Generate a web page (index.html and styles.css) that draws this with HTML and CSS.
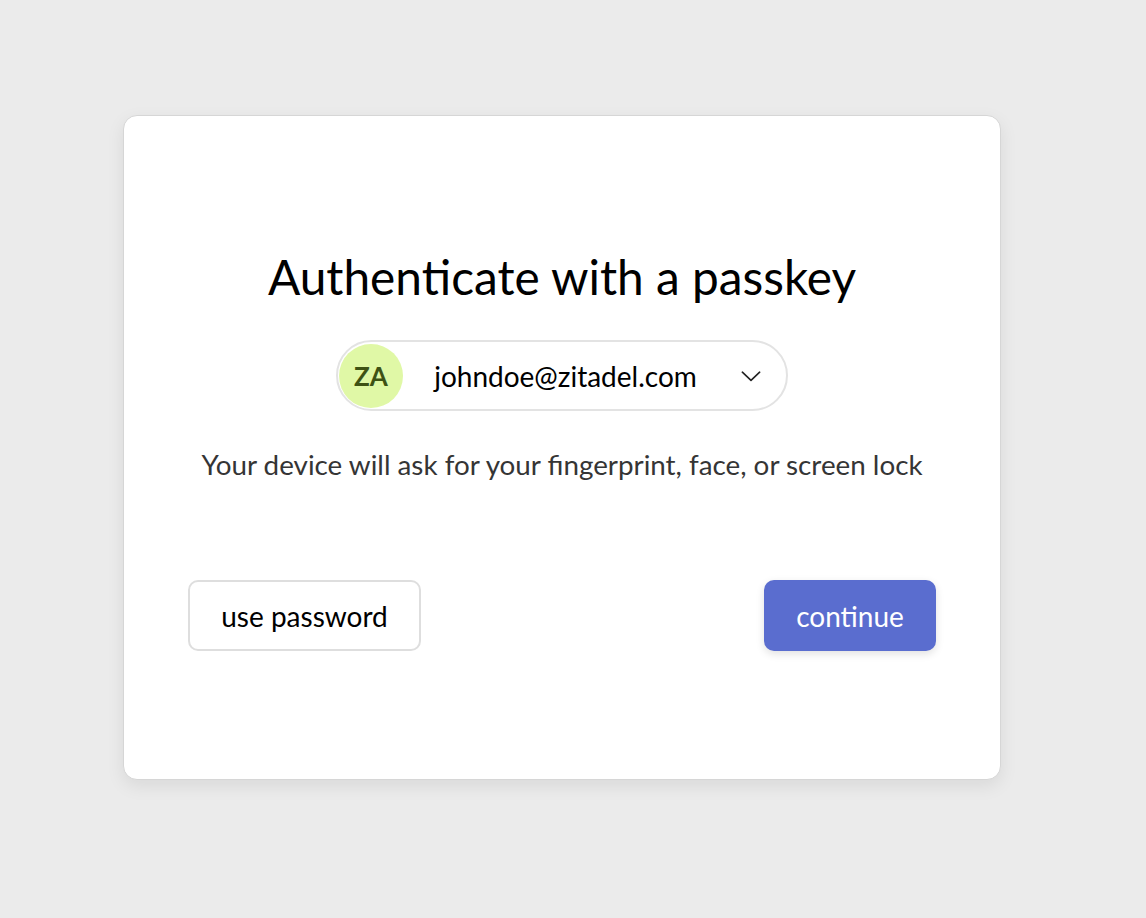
FILE: index.html
```html
<!DOCTYPE html>
<html>
<head>
<meta charset="utf-8">
<link rel="stylesheet" href="styles.css">
</head>
<body>
<div class="page">
  <div class="card">
    <h1 class="title">Authenticate with a passkey</h1>
    <div class="user-row">
      <div class="user-pill">
        <div class="avatar">ZA</div>
        <span class="email">johndoe@zitadel.com</span>
        <svg class="chevron" width="26" height="26" viewBox="0 0 24 24" fill="none" stroke="#222" stroke-width="1.5" stroke-linecap="round" stroke-linejoin="round"><path d="M4 8.5l8 7.5 8-7.5"/></svg>
      </div>
    </div>
    <p class="desc">Your device will ask for your fingerprint, face, or screen lock</p>
    <div class="actions">
      <button class="btn btn-secondary">use password</button>
      <button class="btn btn-primary">continue</button>
    </div>
  </div>
</div>
</body>
</html>
```

FILE: styles.css
```css
html, body {
  margin: 0;
  padding: 0;
  background: #ebebeb;
  font-family: Lato, "Noto Sans", sans-serif;
}
.page {
  width: 1146px;
  height: 918px;
  padding-top: 115px;
  box-sizing: border-box;
}
.card {
  margin-left: 123px;
  width: 878px;
  height: 665px;
  box-sizing: border-box;
  background: #fff;
  border: 1.5px solid #d6d6d6;
  border-radius: 14px;
  box-shadow: 0 6px 18px rgba(0,0,0,0.08);
  padding: 0 64px;
  display: flex;
  flex-direction: column;
  align-items: stretch;
}
.title {
  margin: 128px 0 0;
  font-size: 47.8px;
  font-weight: 400;
  line-height: 66px;
  text-align: center;
  color: #000;
}
.user-row {
  display: flex;
  justify-content: center;
  margin-top: 30px;
}
.user-pill {
  display: flex;
  align-items: center;
  width: 452px;
  height: 71px;
  box-sizing: border-box;
  border: 2px solid #e3e3e3;
  border-radius: 36px;
  padding: 0 22px 0 1px;
}
.avatar {
  width: 64px;
  height: 64px;
  border-radius: 50%;
  background: #e0f8a6;
  color: #3e5214;
  font-weight: 700;
  font-size: 26px;
  display: flex;
  align-items: center;
  justify-content: center;
  flex: none;
}
.email {
  flex: 1;
  text-align: center;
  font-size: 28px;
  color: #000;
  padding-right: 10px;
}
.chevron {
  flex: none;
}
.desc {
  margin: 34px 0 0;
  text-align: center;
  font-size: 27.8px;
  line-height: 40px;
  color: #353535;
}
.actions {
  margin-top: 95px;
  display: flex;
  justify-content: space-between;
}
.btn {
  height: 71px;
  border-radius: 10px;
  font-family: Lato, "Noto Sans", sans-serif;
  font-size: 28px;
  padding: 0;
  cursor: pointer;
}
.btn-secondary {
  width: 233px;
  background: #fff;
  border: 2px solid #dedede;
  color: #000;
}
.btn-primary {
  width: 172px;
  background: #5a6dcf;
  border: none;
  color: #fff;
  box-shadow: 0 3px 8px rgba(0,0,0,0.12);
}
```
